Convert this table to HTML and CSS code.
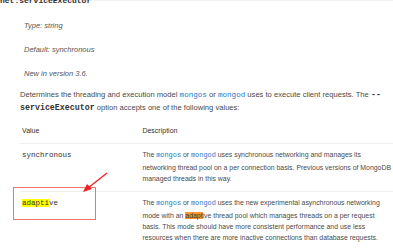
FILE: index.html
```html
<!DOCTYPE html>
<html>
<head>
<meta charset="utf-8">
<link rel="stylesheet" href="styles.css">
</head>
<body>
<div class="topband"></div>
<h3 class="opt-name">net.serviceExecutor</h3>
<div class="opt-body">
  <p class="field first"><em>Type</em>: string</p>
  <p class="field"><em>Default</em>: synchronous</p>
  <p class="field"><em>New in version 3.6.</em></p>
  <p class="desc">Determines the threading and execution model <a class="code-link">mongos</a> or <a class="code-link">mongod</a> uses to execute client requests. The <code class="code-dark">--serviceExecutor</code> option accepts one of the following values:</p>
  <table class="vals">
    <thead>
      <tr><th class="col-value">Value</th><th>Description</th></tr>
    </thead>
    <tbody>
      <tr>
        <td class="col-value"><code class="code-val">synchronous</code></td>
        <td>The <a class="code-link">mongos</a> or <a class="code-link">mongod</a> uses synchronous networking and manages its<br>networking thread pool on a per connection basis. Previous versions of MongoDB<br>managed threads in this way.</td>
      </tr>
      <tr>
        <td class="col-value"><code class="code-val"><mark class="hl-yellow">adapti</mark>ve</code></td>
        <td>The <a class="code-link">mongos</a> or <a class="code-link">mongod</a> uses the new experimental asynchronous networking<br>mode with an <mark class="hl-orange">adapt</mark>ive thread pool which manages threads on a per request<br>basis. This mode should have more consistent performance and use less<br>resources when there are more inactive connections than database requests.</td>
      </tr>
    </tbody>
  </table>
</div>
<div class="callout-box"></div>
<svg class="arrow" width="30" height="24" viewBox="0 0 30 24">
  <line x1="27" y1="2" x2="8" y2="17" stroke="#f02020" stroke-width="1.3"/>
  <polygon points="3,21 7,13 12,18" fill="#f02020"/>
</svg>
</body>
</html>
```
FILE: styles.css
```css
html, body {
  margin: 0;
  padding: 0;
  background: #ffffff;
  overflow: hidden;
}
body {
  width: 393px;
  height: 249px;
  position: relative;
  font-family: "Liberation Sans", Arial, sans-serif;
  color: #4a4a4a;
}
.topband {
  height: 1px;
  background: #f2f2f2;
}
.opt-name {
  margin: -7px 0 0 0;
  padding-left: 0;
  font-family: "Liberation Mono", "DejaVu Sans Mono", monospace;
  font-size: 8px;
  line-height: 14px;
  font-weight: bold;
  color: #333;
}
.opt-body {
  padding-left: 20px;
}
.field {
  margin: 0;
  padding-left: 4px;
  font-size: 7.5px;
  line-height: 11px;
  font-style: italic;
  color: #555;
  height: 24px;
  display: flex;
  align-items: center;
}
.field.first {
  margin-top: 5px;
}
.desc {
  margin: 4px 0 0 0;
  font-size: 7.6px;
  line-height: 11.5px;
  color: #4a4a4a;
}
.code-link {
  font-family: "Liberation Mono", "DejaVu Sans Mono", monospace;
  color: #2a78c4;
  text-decoration: none;
}
.code-dark {
  font-family: "Liberation Mono", "DejaVu Sans Mono", monospace;
  font-size: 8.3px;
  line-height: 1;
  color: #333;
  font-weight: bold;
}
.vals {
  border-collapse: collapse;
  margin-top: 12.3px;
  width: 373px;
  font-size: 6.9px;
  line-height: 11.3px;
  white-space: nowrap;
}
.vals th {
  text-align: left;
  font-weight: normal;
  color: #333;
  padding: 0 2px 6.3px 2px;
  font-size: 7px;
}
.vals td {
  vertical-align: top;
  padding: 5.5px 2px 6.5px 2px;
  border-top: 1px solid #eeeeee;
}
.col-value {
  width: 121px;
}
.code-val {
  font-family: "Liberation Mono", "DejaVu Sans Mono", monospace;
  font-size: 7.5px;
  color: #333;
}
.hl-yellow {
  background: #ffff00;
  color: #333;
}
.hl-orange {
  background: #ff9632;
  color: #333;
}
.callout-box {
  position: absolute;
  left: 13px;
  top: 187px;
  width: 83px;
  height: 33px;
  border: 1.5px solid #f07272;
  box-sizing: border-box;
}
.arrow {
  position: absolute;
  left: 80px;
  top: 171px;
}
```
